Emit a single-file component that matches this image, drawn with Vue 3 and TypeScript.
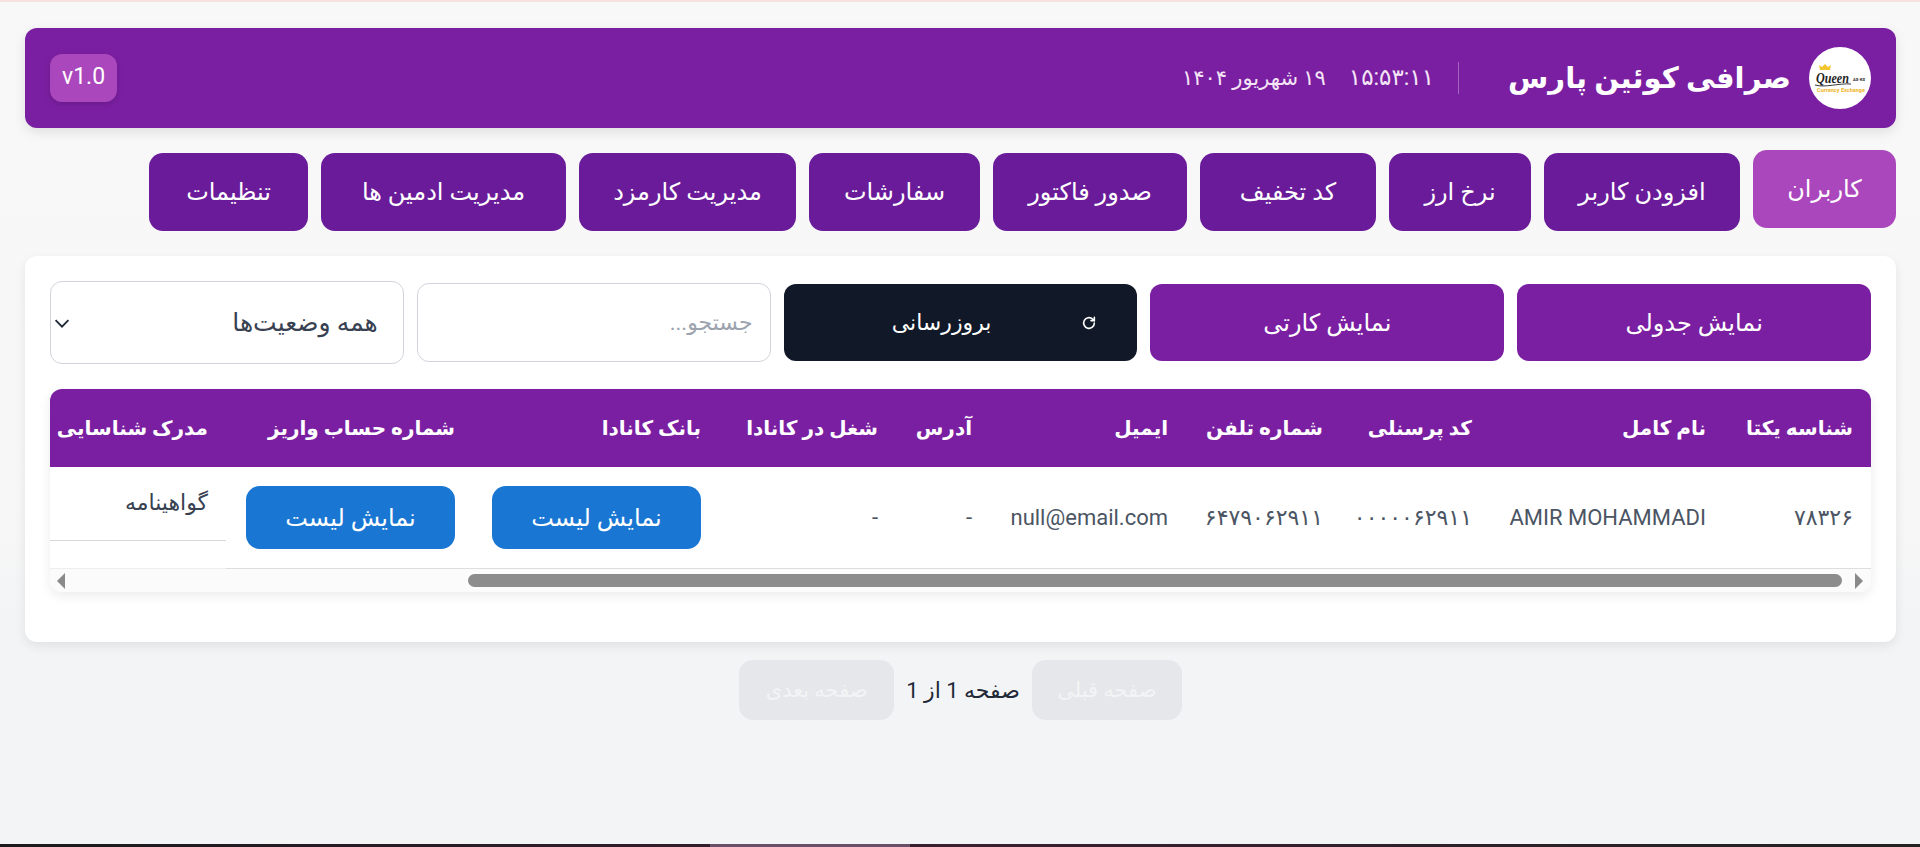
<script setup lang="ts">
import { ref } from 'vue';

interface Column {
	title: string;
	width: number;
}

interface NavItem {
	label: string;
	width: number;
}

const navItems: NavItem[] = [
	{ label: 'کاربران', width: 143 },
	{ label: 'افزودن کاربر', width: 196 },
	{ label: 'نرخ ارز', width: 142 },
	{ label: 'کد تخفیف', width: 176 },
	{ label: 'صدور فاکتور', width: 194 },
	{ label: 'سفارشات', width: 171 },
	{ label: 'مدیریت کارمزد', width: 217 },
	{ label: 'مدیریت ادمین ها', width: 245 },
	{ label: 'تنظیمات', width: 159 },
];

const columns: Column[] = [
	{ title: 'شناسه یکتا', width: 147 },
	{ title: 'نام کامل', width: 234 },
	{ title: 'کد پرسنلی', width: 149 },
	{ title: 'شماره تلفن', width: 155 },
	{ title: 'ایمیل', width: 196 },
	{ title: 'آدرس', width: 94 },
	{ title: 'شغل در کانادا', width: 177 },
	{ title: 'بانک کانادا', width: 246 },
	{ title: 'شماره حساب واریز', width: 247 },
	{ title: 'مدرک شناسایی', width: 176 },
];

const activeNav = ref(0);
</script>

<template>
	<div class="page" dir="rtl">
		<div class="top-line"></div>
		<main class="content">
			<header class="topbar">
				<div class="brand">
					<div class="logo">
						<svg viewBox="0 0 62 62" width="62" height="62">
							<path d="M11 23 L10 18 L13 20 L16 17 L19 20 L22 18 L21 23 Z" fill="#f5c431" />
							<text x="7" y="36" textLength="33" lengthAdjust="spacingAndGlyphs" class="logo-name">Queen</text>
							<text x="44" y="34" textLength="12" lengthAdjust="spacingAndGlyphs" class="logo-mini">AS-KS</text>
							<path d="M6 38 C16 41 30 36 42 37" stroke="#222" stroke-width="0.9" fill="none" />
							<text x="8" y="45" textLength="48" lengthAdjust="spacingAndGlyphs" class="logo-sub">Currency Exchange</text>
						</svg>
					</div>
					<h1 class="title">صرافی کوئین پارس</h1>
					<div class="clock">
						<span class="time">۱۵:۵۳:۱۱</span>
						<span>۱۹ شهریور ۱۴۰۴</span>
					</div>
				</div>
				<div class="version" dir="ltr">v1.0</div>
			</header>

			<nav class="nav">
				<button
					v-for="(item, i) in navItems"
					:key="item.label"
					class="nav-btn"
					:class="{ active: i === activeNav }"
					:style="{ width: item.width + 'px' }"
				>
					{{ item.label }}
				</button>
			</nav>

			<section class="card">
				<div class="toolbar">
					<button class="tool-btn">نمایش جدولی</button>
					<button class="tool-btn">نمایش کارتی</button>
					<button class="tool-btn dark">
						<svg viewBox="0 0 24 24" width="16" height="16" fill="none" stroke="#fff" stroke-width="2.4" stroke-linecap="round" stroke-linejoin="round">
							<path d="M20 12a8 8 0 1 1-2.6-5.9L20 8.5" />
							<path d="M20 3.5v5h-5" />
						</svg>
						<span>بروزرسانی</span>
					</button>
					<input class="search" type="text" placeholder="جستجو..." />
					<div class="select">
						<span>همه وضعیت‌ها</span>
						<svg viewBox="0 0 14 14" width="20" height="20" fill="none" stroke="#1f2937" stroke-width="1.3">
							<path d="M2.5 5 L7 9.5 L11.5 5" />
						</svg>
					</div>
				</div>

				<div class="table-box">
					<div class="table-scroll">
						<table class="users">
							<colgroup>
								<col v-for="c in columns" :key="c.title" :style="{ width: c.width + 'px' }" />
							</colgroup>
							<thead>
								<tr>
									<th v-for="c in columns" :key="c.title">{{ c.title }}</th>
								</tr>
							</thead>
							<tbody>
								<tr>
									<td>۷۸۳۲۶</td>
									<td>AMIR MOHAMMADI</td>
									<td>۰۰۰۰۰۶۲۹۱۱</td>
									<td>۶۴۷۹۰۶۲۹۱۱</td>
									<td>null@email.com</td>
									<td>-</td>
									<td>-</td>
									<td><button class="list-btn">نمایش لیست</button></td>
									<td><button class="list-btn">نمایش لیست</button></td>
									<td class="doc-cell">
										<div class="doc-item">گواهینامه</div>
									</td>
								</tr>
							</tbody>
						</table>
					</div>
					<div class="scrollbar" dir="ltr">
						<span class="arrow left"></span>
						<div class="track"><div class="thumb"></div></div>
						<span class="arrow right"></span>
					</div>
				</div>
			</section>

			<div class="pager">
				<button class="page-btn prev" disabled>صفحه قبلی</button>
				<span class="page-info">صفحه 1 از 1</span>
				<button class="page-btn next" disabled>صفحه بعدی</button>
			</div>
		</main>
		<footer class="taskbar"><div class="taskbar-item"></div></footer>
	</div>
</template>

<style>
body {
	margin: 0;
	background: #f4f5f6;
}
</style>

<style scoped>
.page {
	display: flex;
	flex-direction: column;
	height: 847px;
	overflow: hidden;
	background: linear-gradient(#f8f8f8, #f7f7f7 60%, #f3f4f6 75%);
	font-family: Roboto, "DejaVu Sans", sans-serif;
	color: #1f2937;
}

.top-line {
	height: 2px;
	background: #f6e3de;
}

.content {
	flex: 1;
	padding: 26px 24px 0 25px;
	min-height: 0;
}

.taskbar {
	display: flex;
	height: 3px;
	padding-right: 1010px;
	background: linear-gradient(90deg, #1a1a1c, #3a2030 50%, #222);
}

.taskbar-item {
	width: 200px;
	background: #6a4f68;
}

.topbar {
	display: flex;
	align-items: center;
	justify-content: space-between;
	height: 100px;
	padding: 0 25px;
	background: #7b1fa2;
	border-radius: 12px;
	box-shadow: 0 4px 12px rgba(0, 0, 0, 0.1);
	color: #fff;
}

.brand {
	display: flex;
	align-items: center;
}

.logo {
	width: 62px;
	height: 62px;
	border-radius: 50%;
	background: #fff;
	overflow: hidden;
	direction: ltr;
}

.logo svg {
	display: block;
}

.logo-name {
	font: italic 700 14px "Liberation Serif", serif;
	fill: #222;
}

.logo-mini {
	font: 700 4px Roboto, sans-serif;
	fill: #222;
}

.logo-sub {
	font: 700 5.5px Roboto, sans-serif;
	fill: #f0b428;
}

.title {
	margin: 0 18px 0 0;
	font-size: 29.2px;
	font-weight: 700;
	white-space: nowrap;
}

.clock {
	display: flex;
	gap: 23px;
	margin-right: 49px;
	padding-right: 24px;
	border-right: 1px solid rgba(255, 255, 255, 0.3);
	font-size: 21px;
	line-height: 32px;
	color: #f3e5f5;
}

.time {
	font-size: 23px;
}

.version {
	padding: 0 12px;
	height: 48px;
	line-height: 46px;
	background: #ab47bc;
	border-radius: 12px;
	box-shadow: 0 2px 6px rgba(0, 0, 0, 0.15);
	font-size: 23px;
}

.nav {
	display: flex;
	gap: 13px;
	margin-top: 25px;
}

.nav-btn {
	height: 78px;
	padding: 0;
	border: 0;
	border-radius: 14px;
	background: #6a1b9a;
	color: #fff;
	font-family: inherit;
	font-size: 24px;
	white-space: nowrap;
}

.nav-btn.active {
	background: #ab47bc;
	transform: translateY(-3px);
}

.card {
	margin-top: 25px;
	padding: 25px;
	height: 386px;
	box-sizing: border-box;
	background: #fff;
	border-radius: 12px;
	box-shadow: 0 4px 12px rgba(0, 0, 0, 0.08);
}

.toolbar {
	display: grid;
	grid-template-columns: repeat(5, 1fr);
	gap: 13px;
	align-items: center;
}

.tool-btn {
	display: flex;
	align-items: center;
	justify-content: center;
	height: 77px;
	border: 0;
	border-radius: 12px;
	background: #7b1fa2;
	color: #fff;
	font-family: inherit;
	font-size: 24px;
}

.tool-btn.dark {
	justify-content: flex-start;
	gap: 90px;
	padding: 0 40px 0 0;
	background: #111827;
	font-size: 22px;
}

.search,
.select {
	box-sizing: border-box;
	width: 100%;
	border: 1px solid #d1d5db;
	border-radius: 12px;
	background: #fff;
	font-family: inherit;
}

.search {
	height: 79px;
	padding: 0 17px;
	font-size: 22px;
	color: #1f2937;
	outline: none;
}

.search::placeholder {
	color: #9ca3af;
}

.select {
	display: flex;
	align-items: center;
	justify-content: space-between;
	height: 83px;
	padding: 0 25px 0 1px;
	font-size: 25px;
	color: #374151;
}

.table-box {
	margin-top: 25px;
	border-radius: 12px;
	background: #fff;
	box-shadow: 0 4px 12px rgba(0, 0, 0, 0.08);
	overflow: hidden;
}

.table-scroll {
	overflow: hidden;
}

.users {
	width: 1821px;
	table-layout: fixed;
	border-collapse: collapse;
	font-size: 22px;
}

.users th {
	height: 78px;
	padding: 0 18px 0 10px;
	background: #7b1fa2;
	color: #fff;
	font-size: 20px;
	font-weight: 700;
	text-align: right;
	white-space: nowrap;
}

.users td {
	height: 101px;
	padding: 0 18px 0 19px;
	border-bottom: 1px solid #dedede;
	color: #4b5563;
	text-align: right;
	white-space: nowrap;
}

.users td.doc-cell {
	padding: 0;
	vertical-align: top;
	border-bottom-color: #eeeeee;
}

.doc-item {
	box-sizing: border-box;
	height: 74px;
	padding: 23px 18px 0;
	border-bottom: 1px solid #d8d8d8;
	line-height: 26px;
	color: #374151;
}

.list-btn {
	display: block;
	width: 209px;
	height: 63px;
	padding: 0;
	border: 0;
	border-radius: 14px;
	background: #1976d2;
	color: #fff;
	font-family: inherit;
	font-size: 24px;
}

.scrollbar {
	display: flex;
	align-items: center;
	gap: 4px;
	height: 23px;
	padding: 0 8px 0 7px;
	background: #fbfbfb;
}

.arrow {
	width: 0;
	height: 0;
	border-top: 8px solid transparent;
	border-bottom: 8px solid transparent;
}

.arrow.left {
	border-right: 8px solid #8a8a8a;
}

.arrow.right {
	border-left: 8px solid #8a8a8a;
}

.track {
	flex: 1;
	display: flex;
	justify-content: flex-end;
	padding-right: 9px;
}

.thumb {
	width: 1374px;
	height: 13px;
	border-radius: 7px;
	background: #8c8c8c;
}

.pager {
	display: flex;
	align-items: center;
	justify-content: center;
	gap: 12px;
	margin-top: 18px;
}

.page-btn {
	height: 60px;
	padding: 0;
	border: 0;
	border-radius: 14px;
	background: #e5e7eb;
	color: #f3f4f6;
	font-family: inherit;
	font-size: 21px;
}

.page-btn.prev {
	width: 150px;
}

.page-btn.next {
	width: 155px;
}

.page-info {
	font-size: 22px;
}
</style>
